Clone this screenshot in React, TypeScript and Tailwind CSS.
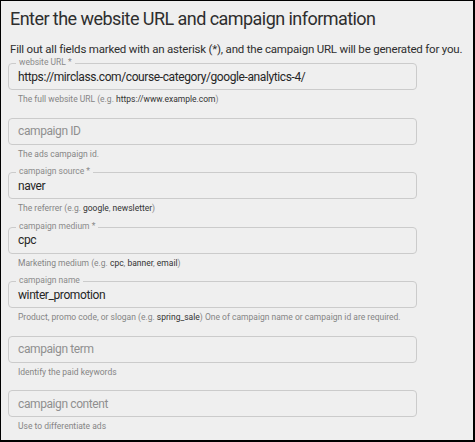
import React from "react";

type Field = {
  label: string;
  value?: string;
  helper: React.ReactNode;
};

const B = ({ children }: { children: React.ReactNode }) => (
  <span className="text-[#333]">{children}</span>
);

const fields: Field[] = [
  {
    label: "website URL *",
    value: "https://mirclass.com/course-category/google-analytics-4/",
    helper: (
      <>
        The full website URL (e.g. <B>https://www.example.com</B>)
      </>
    ),
  },
  { label: "campaign ID", helper: <>The ads campaign id.</> },
  {
    label: "campaign source *",
    value: "naver",
    helper: (
      <>
        The referrer (e.g. <B>google</B>, <B>newsletter</B>)
      </>
    ),
  },
  {
    label: "campaign medium *",
    value: "cpc",
    helper: (
      <>
        Marketing medium (e.g. <B>cpc</B>, <B>banner</B>, <B>email</B>)
      </>
    ),
  },
  {
    label: "campaign name",
    value: "winter_promotion",
    helper: (
      <>
        Product, promo code, or slogan (e.g. <B>spring_sale</B>) One of campaign name or campaign id are required.
      </>
    ),
  },
  { label: "campaign term", helper: <>Identify the paid keywords</> },
  { label: "campaign content", helper: <>Use to differentiate ads</> },
];

function FieldRow({ f }: { f: Field }) {
  return (
    <div className="h-[54.5px]">
      <div className="relative h-[27px] w-[409px] rounded-[4px] border border-[#cbcbcb]">
        {f.value ? (
          <>
            <span className="absolute left-[7px] top-[-7px] whitespace-nowrap bg-[#efefef] px-[3px] text-[8.5px] leading-[11px] text-[#8a8a8a]">
              {f.label}
            </span>
            <div className="flex h-full items-center whitespace-nowrap pl-[9px] text-[12px] tracking-[-0.4px] text-[#262626]">
              {f.value}
            </div>
          </>
        ) : (
          <div className="flex h-full items-center whitespace-nowrap pl-[9px] text-[12px] tracking-[-0.4px] text-[#8f8f8f]">
            {f.label}
          </div>
        )}
      </div>
      <div className="whitespace-nowrap pl-[10px] pt-[4px] text-[8.5px] leading-[11px] text-[#858585]">
        {f.helper}
      </div>
    </div>
  );
}

export default function App() {
  return (
    <div
      className="h-[442px] w-[475px] overflow-hidden border-l border-t border-r-2 border-b-2 border-black bg-[#efefef] pl-[7px]"
      style={{ fontFamily: "Roboto, 'Noto Sans', sans-serif" }}
    >
      <div className="whitespace-nowrap pl-[2px] pt-[7px] text-[18px] leading-[22px] tracking-[-0.55px] text-[#2e2e2e]">
        Enter the website URL and campaign information
      </div>
      <div className="whitespace-nowrap pl-[2px] pt-[12px] text-[11.5px] leading-[14px] tracking-[-0.2px] text-[#2e2e2e]">
        Fill out all fields marked with an asterisk (*), and the campaign URL will be generated for you.
      </div>
      <div className="pt-[7px]">
        {fields.map((f) => (
          <FieldRow key={f.label} f={f} />
        ))}
      </div>
    </div>
  );
}
